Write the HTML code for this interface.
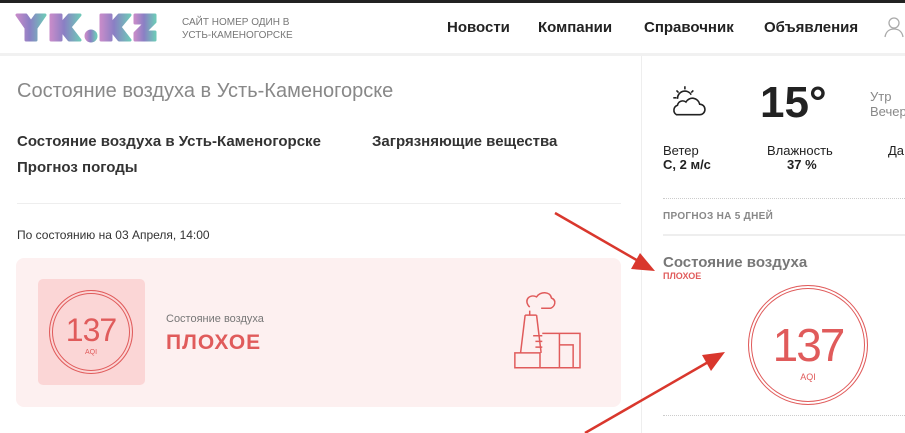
<!DOCTYPE html>
<html><head><meta charset="utf-8"><style>
*{margin:0;padding:0;box-sizing:border-box}
body{width:905px;height:433px;overflow:hidden;background:#fff;font-family:"Liberation Sans",sans-serif;position:relative;color:#222}
.a{position:absolute;white-space:nowrap}
</style></head><body>
<div class="a" style="left:0;top:0;width:905px;height:3px;background:#222"></div>
<div class="a" style="left:0;top:53px;width:905px;height:3px;background:#f1f1f1"></div>
<svg class="a" style="left:14px;top:10px" width="145" height="36" viewBox="0 0 145 36">
<defs><linearGradient id="g" x1="0" x2="1"><stop offset="0" stop-color="#c58bc9"/><stop offset="0.45" stop-color="#8a7fc4"/><stop offset="1" stop-color="#6fc7b8"/></linearGradient></defs>
<g fill="url(#g)" stroke="url(#g)" stroke-width="3" stroke-linejoin="round">
<path d="M3 5h9l5 7 5-7h9l-9 13v12h-10v-12z"/>
<path d="M37 5h10v9l8-9h11l-10 12 10 13h-11l-8-10v10h-10z"/>
<circle cx="77" cy="26" r="5"/>
<path d="M87 5h10v9l8-9h11l-10 12 10 13h-11l-8-10v10h-10z"/>
<path d="M121 5h20v7l-10 10h10v8h-20v-7l10-10h-10z"/>
</g></svg>
<div class="a" style="left:182px;top:16px;font-size:10px;line-height:13px;color:#777">САЙТ НОМЕР ОДИН В<br>УСТЬ-КАМЕНОГОРСКЕ</div>
<div class="a" style="left:447px;top:19px;font-size:15px;font-weight:bold;color:#222">Новости</div>
<div class="a" style="left:538px;top:19px;font-size:15px;font-weight:bold;color:#222">Компании</div>
<div class="a" style="left:644px;top:19px;font-size:15px;font-weight:bold;color:#222">Справочник</div>
<div class="a" style="left:764px;top:19px;font-size:15px;font-weight:bold;color:#222">Объявления</div>
<svg class="a" style="left:884px;top:16px" width="21" height="22"><circle cx="10" cy="7" r="5" fill="none" stroke="#aaa" stroke-width="1.3"/><path d="M1 21c1-6 5-8 9-8s8 2 9 8" fill="none" stroke="#aaa" stroke-width="1.3"/></svg>
<div class="a" style="left:641px;top:56px;width:1px;height:377px;background:#eee"></div>
<div class="a" style="left:17px;top:80px;font-size:20px;color:#888">Состояние воздуха в Усть-Каменогорске</div>
<div class="a" style="left:17px;top:133px;font-size:15px;font-weight:bold;color:#333">Состояние воздуха в Усть-Каменогорске</div>
<div class="a" style="left:372px;top:133px;font-size:15px;font-weight:bold;color:#333">Загрязняющие вещества</div>
<div class="a" style="left:17px;top:159px;font-size:15px;font-weight:bold;color:#333">Прогноз погоды</div>
<div class="a" style="left:17px;top:203px;width:604px;height:1px;background:#eee"></div>
<div class="a" style="left:17px;top:228px;font-size:12px;color:#333">По состоянию на 03 Апреля, 14:00</div>
<div class="a" style="left:16px;top:258px;width:605px;height:149px;background:#fdf0f0;border-radius:8px"></div>
<div class="a" style="left:38px;top:279px;width:107px;height:106px;background:#fbd6d6;border-radius:5px"></div>
<div class="a" style="left:49px;top:290px;width:84px;height:84px;border:1.5px solid #e05b5b;border-radius:50%;box-shadow:inset 0 0 0 2px #fbd6d6,inset 0 0 0 3px #e05b5b"></div>
<div class="a" style="left:49px;top:312px;width:84px;text-align:center;font-size:32px;color:#e05b5b;letter-spacing:-1px">137</div>
<div class="a" style="left:49px;top:349px;width:84px;text-align:center;font-size:7px;color:#e05b5b">AQI</div>
<div class="a" style="left:166px;top:313px;font-size:11px;color:#777">Состояние воздуха</div>
<div class="a" style="left:166px;top:331px;font-size:21px;font-weight:bold;color:#e05b5b;letter-spacing:1px">ПЛОХОЕ</div>
<svg class="a" style="left:510px;top:290px" width="76" height="80" viewBox="8 10 60 70" fill="none" stroke="#e05b5b" stroke-width="1.3">
<path d="M22 25c-6-6 0-12 6-9 3-5 12-5 13 1 5 2 3 8-1 9h-8"/>
<path d="M18 32l-4 33M28 32l4 33M18 32h10M22 28v4"/>
<path d="M9 65h22v13h-22zM25 50h8M27 55h6M27 60h6"/>
<path d="M33 48h33v30h-35M48 48v30M48 58h12v20"/>
</svg>
<svg class="a" style="left:668px;top:84px" width="38" height="34" viewBox="0 0 36 32" fill="none" stroke="#222" stroke-width="1.5">
<path d="M16 2v3M8 6l2 2M24 6l-2 2M5 13h3M9 14a7 7 0 0 1 13-4"/>
<path d="M8 29h22a5 5 0 0 0 0-10 7 7 0 0 0-13-2 5 5 0 0 0-8 3 5 5 0 0 0-1 9z"/>
</svg>
<div class="a" style="left:760px;top:78px;font-size:44px;font-weight:bold;color:#222">15°</div>
<div class="a" style="left:870px;top:89px;font-size:13px;color:#888">Утр</div>
<div class="a" style="left:870px;top:104px;font-size:13px;color:#888">Вечер</div>
<div class="a" style="left:663px;top:143px;font-size:13px;color:#222">Ветер</div>
<div class="a" style="left:663px;top:157px;font-size:13px;font-weight:bold;color:#222">С, 2 м/с</div>
<div class="a" style="left:767px;top:143px;font-size:13px;color:#222">Влажность</div>
<div class="a" style="left:787px;top:157px;font-size:13px;font-weight:bold;color:#222">37 %</div>
<div class="a" style="left:888px;top:143px;font-size:13px;color:#222">Да</div>
<div class="a" style="left:663px;top:198px;width:242px;border-top:1px dotted #ccc"></div>
<div class="a" style="left:663px;top:211px;font-size:10px;font-weight:bold;color:#888;letter-spacing:0.3px">ПРОГНОЗ НА 5 ДНЕЙ</div>
<div class="a" style="left:663px;top:234px;width:242px;height:2px;background:#eee"></div>
<div class="a" style="left:663px;top:254px;font-size:15px;font-weight:bold;color:#777">Состояние воздуха</div>
<div class="a" style="left:663px;top:271px;font-size:9px;font-weight:bold;color:#e05b5b">ПЛОХОЕ</div>
<div class="a" style="left:748px;top:285px;width:120px;height:120px;border:1.5px solid #e05b5b;border-radius:50%;box-shadow:inset 0 0 0 2px #fff,inset 0 0 0 3px #e05b5b"></div>
<div class="a" style="left:748px;top:318px;width:120px;text-align:center;font-size:46px;color:#e05b5b;letter-spacing:-2px">137</div>
<div class="a" style="left:748px;top:372px;width:120px;text-align:center;font-size:9px;color:#e05b5b">AQI</div>
<div class="a" style="left:663px;top:415px;width:242px;border-top:1px dotted #ccc"></div>
<svg class="a" style="left:0;top:0" width="905" height="433">
<g stroke="#d9372d" stroke-width="2.5" fill="#d9372d">
<line x1="555" y1="213" x2="640" y2="262"/>
<polygon points="655,271 631,269 640,253" stroke="none"/>
<line x1="585" y1="433" x2="710" y2="361"/>
<polygon points="725,352 711,371 702,355" stroke="none"/>
</g></svg>
</body></html>
